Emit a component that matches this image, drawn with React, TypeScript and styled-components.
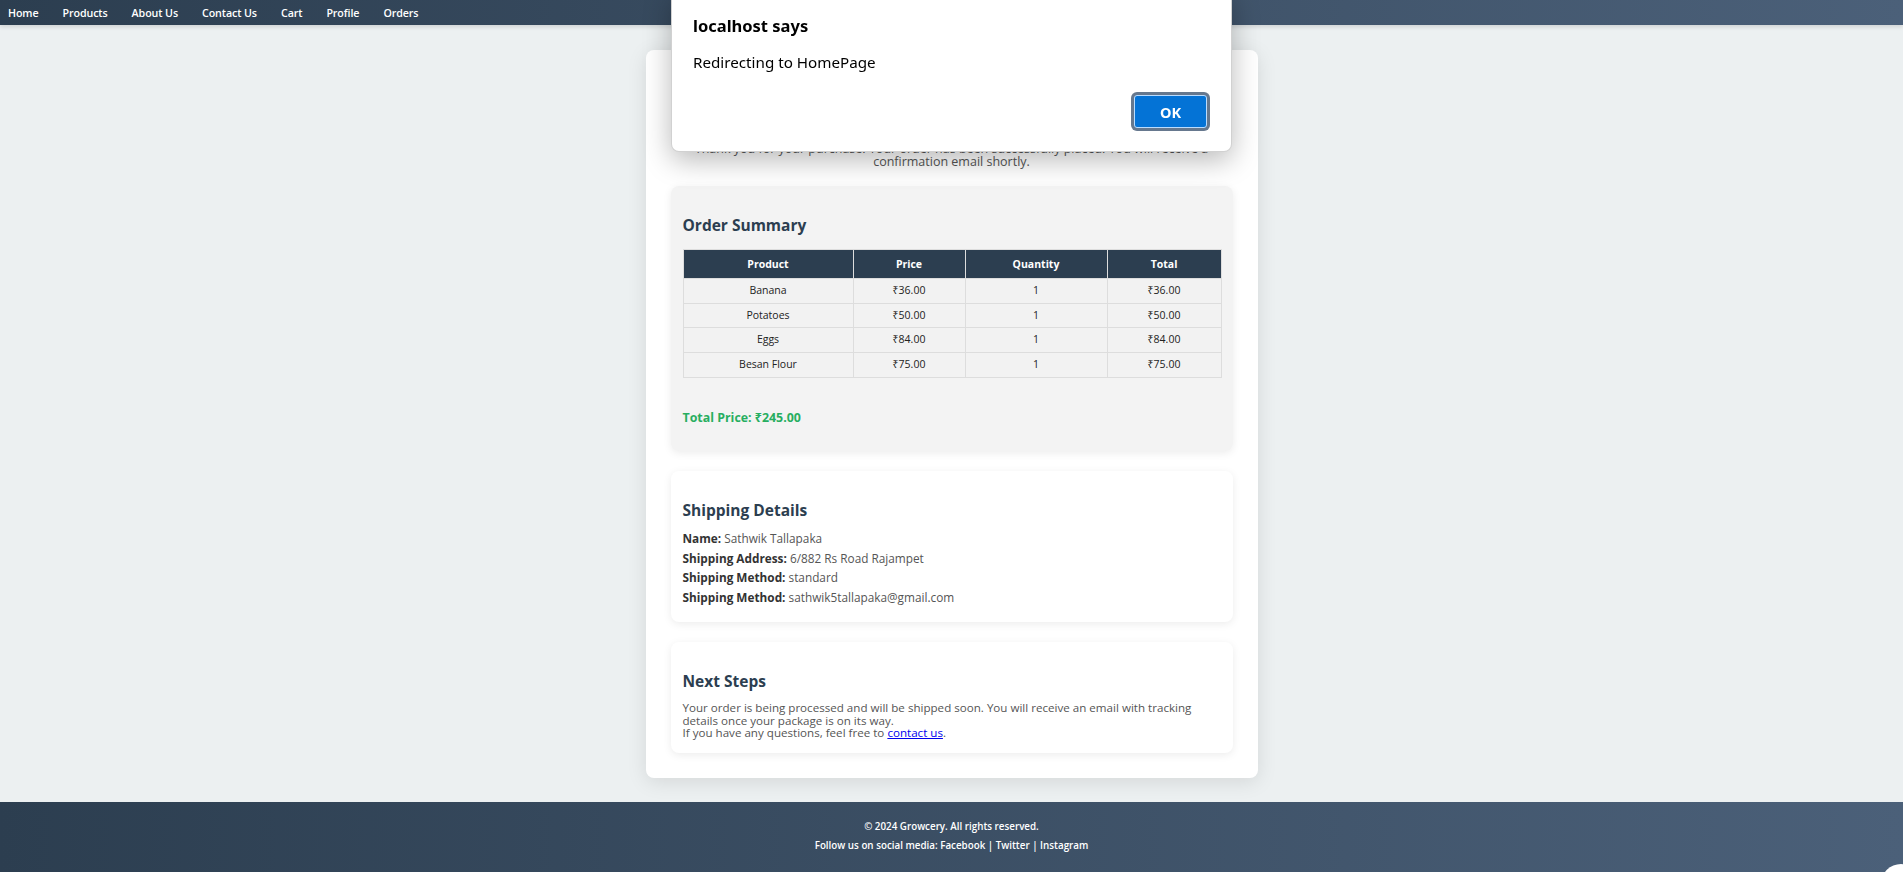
import React from "react";
import styled, { createGlobalStyle } from "styled-components";

const GlobalStyle = createGlobalStyle`
  html, body {
    margin: 0;
    padding: 0;
    overflow: hidden;
  }
  body {
    background: #ecf0f1;
    font-family: "Open Sans", "Noto Sans", Arial, sans-serif;
    color: #333;
  }
  * { box-sizing: border-box; }
`;

const Page = styled.div`
  min-height: 872px;
  display: flex;
  flex-direction: column;
`;

const NavBar = styled.nav`
  height: 25px;
  display: flex;
  align-items: center;
  gap: 24px;
  padding-left: 8px;
  background: linear-gradient(to right, #2c3e50, #4b6079);
  box-shadow: 0 2px 4px rgba(0, 0, 0, 0.12);
`;

const NavLink = styled.a`
  color: #fff;
  font-size: 10.7px;
  font-weight: 600;
  text-decoration: none;
  letter-spacing: -0.1px;
`;

const Main = styled.main`
  flex: 1;
  display: flex;
  justify-content: center;
  align-items: flex-start;
  padding: 25px 0 24px;
`;

const Card = styled.div`
  width: 612px;
  background: #fff;
  border-radius: 8px;
  box-shadow: 0 4px 20px rgba(0, 0, 0, 0.1);
  padding: 24px 25px 25px;
  display: flex;
  flex-direction: column;
`;

const Title = styled.h1`
  margin: 8px 0 26px;
  font-size: 24px;
  line-height: 34px;
  text-align: center;
  color: #27ae60;
`;

const Intro = styled.p`
  margin: 0;
  font-size: 12.5px;
  line-height: 13px;
  color: #555;
  text-align: center;
`;

const Sections = styled.div`
  display: flex;
  flex-direction: column;
  gap: 20px;
  margin-top: 18px;
`;

const Section = styled.section<{ $tone?: "gray" | "white" }>`
  background: ${(p) => (p.$tone === "gray" ? "#f3f3f3" : "#fff")};
  border-radius: 8px;
  box-shadow: 0 2px 8px rgba(0, 0, 0, 0.08);
  padding: 12px 12px 12px;
`;

const SectionTitle = styled.h3`
  margin: 15px 0 9px;
  font-size: 15.5px;
  line-height: 24px;
  font-weight: 700;
  color: #2c3e50;
`;

const Table = styled.table`
  width: 538px;
  margin-top: 12px;
  border-collapse: collapse;
  table-layout: fixed;
  font-size: 10.5px;
`;

const Th = styled.th`
  background: #2c3e50;
  color: #fff;
  font-weight: 700;
  padding: 6px 8px;
  line-height: 16px;
  border: 1px solid #ddd;
  text-align: center;
`;

const Td = styled.td`
  padding: 4px 8px;
  line-height: 15.7px;
  border: 1px solid #ddd;
  text-align: center;
  color: #222;
  background: #f2f2f2;
`;

const TotalPrice = styled.h4`
  margin: 31px 0 12px;
  font-size: 12.4px;
  line-height: 18px;
  font-weight: 700;
  color: #27ae60;
`;

const Detail = styled.p`
  margin: 4px 0;
  font-size: 11.8px;
  line-height: 15.8px;
  color: #555;

  strong {
    color: #333;
    font-weight: 700;
  }
`;

const Steps = styled.p`
  margin: 0 0 1px;
  font-size: 11.6px;
  line-height: 12.5px;
  color: #555;

  a {
    color: #0000ee;
  }
`;

const Footer = styled.footer`
  height: 71px;
  background: linear-gradient(to right, #2c3e50, #4b6079);
  color: #fff;
  text-align: center;
  padding-top: 18px;
  font-size: 9.8px;
  font-weight: 600;
`;

const FooterLine = styled.p`
  margin: 0 0 5px;
  line-height: 14px;
`;

const Overlay = styled.div`
  position: fixed;
  left: 671px;
  top: -10px;
  width: 561px;
  height: 162px;
  background: #fff;
  border-radius: 8px;
  border: 1px solid rgba(0, 0, 0, 0.18);
  box-shadow: 0 8px 28px rgba(0, 0, 0, 0.28);
  padding: 23px 21px 0 21px;
  display: flex;
  flex-direction: column;
  font-family: "Noto Sans", "Open Sans", Arial, sans-serif;
  color: #000;
`;

const DialogTitle = styled.div`
  font-size: 16.5px;
  line-height: 24px;
  font-weight: 700;
`;

const DialogMessage = styled.div`
  margin-top: 13px;
  font-size: 15.2px;
  line-height: 22px;
`;

const DialogActions = styled.div`
  margin-top: 22px;
  display: flex;
  justify-content: flex-end;
  padding-right: 3px;
`;

const OkButton = styled.button`
  width: 73px;
  height: 33px;
  background: #0473d6;
  color: #fff;
  border: 1px solid #b9dcff;
  border-radius: 3px;
  box-shadow: 0 0 0 3px #66788e;
  font-family: "Noto Sans", "Open Sans", Arial, sans-serif;
  font-size: 14.5px;
  font-weight: 700;
`;

const FloatingDot = styled.div`
  position: fixed;
  left: 1881px;
  bottom: -32px;
  width: 40px;
  height: 40px;
  border-radius: 50%;
  background: #fff;
`;

const items = [
  { name: "Banana", price: "₹36.00", qty: 1, total: "₹36.00" },
  { name: "Potatoes", price: "₹50.00", qty: 1, total: "₹50.00" },
  { name: "Eggs", price: "₹84.00", qty: 1, total: "₹84.00" },
  { name: "Besan Flour", price: "₹75.00", qty: 1, total: "₹75.00" },
];

const navLinks = ["Home", "Products", "About Us", "Contact Us", "Cart", "Profile", "Orders"];

export default function App() {
  return (
    <>
      <GlobalStyle />
      <Page>
        <NavBar>
          {navLinks.map((l) => (
            <NavLink key={l} href="#">
              {l}
            </NavLink>
          ))}
        </NavBar>
        <Main>
          <Card>
            <Title>Order Confirmed!</Title>
            <Intro>
              Thank you for your purchase! Your order has been successfully placed. You will receive a
              <br />
              confirmation email shortly.
            </Intro>
            <Sections>
              <Section $tone="gray">
                <SectionTitle>Order Summary</SectionTitle>
                <Table>
                  <colgroup>
                    <col style={{ width: 170 }} />
                    <col style={{ width: 112 }} />
                    <col style={{ width: 142 }} />
                    <col style={{ width: 114 }} />
                  </colgroup>
                  <thead>
                    <tr>
                      <Th>Product</Th>
                      <Th>Price</Th>
                      <Th>Quantity</Th>
                      <Th>Total</Th>
                    </tr>
                  </thead>
                  <tbody>
                    {items.map((it) => (
                      <tr key={it.name}>
                        <Td>{it.name}</Td>
                        <Td>{it.price}</Td>
                        <Td>{it.qty}</Td>
                        <Td>{it.total}</Td>
                      </tr>
                    ))}
                  </tbody>
                </Table>
                <TotalPrice>Total Price: ₹245.00</TotalPrice>
              </Section>
              <Section>
                <SectionTitle>Shipping Details</SectionTitle>
                <Detail>
                  <strong>Name:</strong> Sathwik Tallapaka
                </Detail>
                <Detail>
                  <strong>Shipping Address:</strong> 6/882 Rs Road Rajampet
                </Detail>
                <Detail>
                  <strong>Shipping Method:</strong> standard
                </Detail>
                <Detail>
                  <strong>Shipping Method:</strong> sathwik5tallapaka@gmail.com
                </Detail>
              </Section>
              <Section>
                <SectionTitle>Next Steps</SectionTitle>
                <Steps>
                  Your order is being processed and will be shipped soon. You will receive an email with tracking
                  <br />
                  details once your package is on its way.
                  <br />
                  If you have any questions, feel free to <a href="#">contact us</a>.
                </Steps>
              </Section>
            </Sections>
          </Card>
        </Main>
        <Footer>
          <FooterLine>© 2024 Growcery. All rights reserved.</FooterLine>
          <FooterLine>Follow us on social media: Facebook | Twitter | Instagram</FooterLine>
        </Footer>
      </Page>
      <Overlay>
        <DialogTitle>localhost says</DialogTitle>
        <DialogMessage>Redirecting to HomePage</DialogMessage>
        <DialogActions>
          <OkButton>OK</OkButton>
        </DialogActions>
      </Overlay>
      <FloatingDot />
    </>
  );
}
